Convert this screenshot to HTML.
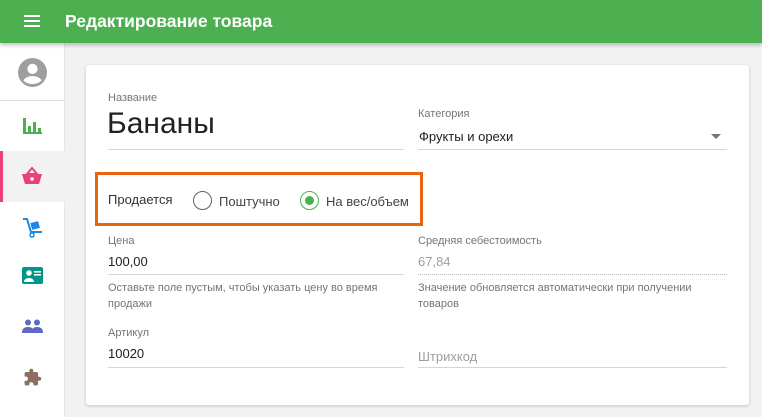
<!DOCTYPE html>
<html><head><meta charset="utf-8"><style>
*{margin:0;padding:0;box-sizing:border-box}
body{width:762px;height:417px;overflow:hidden;background:#f2f2f2;font-family:"Liberation Sans",sans-serif;position:relative}
.a{position:absolute}
.hdr{left:0;top:0;width:762px;height:43px;background:#4caf50;box-shadow:0 2px 4px rgba(0,0,0,.25);z-index:2}
.side{left:0;top:43px;width:65px;height:374px;background:#fff;border-right:1px solid #e6e6e6}
.card{left:86px;top:65px;width:663px;height:340px;background:#fff;border-radius:3px;box-shadow:0 1px 3px rgba(0,0,0,.2)}
.lbl{font-size:11px;color:#757575}
.val{font-size:13px;color:#212121}
.line{height:1px;background:#d6d6d6}
.hint{font-size:11px;color:#757575;line-height:16px}
</style></head><body>
<div class="a hdr">
<svg class="a" style="left:24px;top:14px" width="16" height="14"><rect y="1" width="16" height="2" fill="#fff"/><rect y="6" width="16" height="2" fill="#fff"/><rect y="11" width="16" height="2" fill="#fff"/></svg>
<div class="a" style="left:65px;top:11px;color:#fff;font-size:17.5px;font-weight:bold">Редактирование товара</div>
</div>
<div class="a side">
<svg class="a" style="left:18px;top:15px" width="29" height="29" viewBox="0 0 24 24"><circle cx="12" cy="12" r="12" fill="#9e9e9e"/><circle cx="12" cy="9" r="4.2" fill="#fff"/><path d="M4.5 18.5c2-3 5-3.5 7.5-3.5s5.5.5 7.5 3.5c-2 2-4.5 3-7.5 3s-5.5-1-7.5-3z" fill="#fff"/></svg>
<div class="a" style="left:0;top:57px;width:65px;height:1px;background:#ddd"></div>
<svg class="a" style="left:23px;top:75px" width="19" height="16"><g fill="#4caf50"><rect x="0" y="0" width="3" height="16"/><rect x="5" y="8" width="3" height="8"/><rect x="10" y="4" width="3" height="12"/><rect x="15" y="10" width="3" height="6"/><rect x="0" y="14" width="19" height="2"/></g></svg>
<div class="a" style="left:0;top:108px;width:65px;height:51px;background:#f2f2f2"></div>
<div class="a" style="left:0;top:108px;width:3px;height:51px;background:#ec407a"></div>
<svg class="a" style="left:22px;top:124px" width="20" height="18" viewBox="0 0 20 18"><path d="M10 1L5 7h10z" fill="none" stroke="#ec407a" stroke-width="2"/><path d="M0 7h20l-3 10H3z" fill="#ec407a"/><circle cx="10" cy="12" r="1.8" fill="#fff"/></svg>
<svg class="a" style="left:22px;top:174px" width="22" height="22" viewBox="0 0 22 22"><path d="M1 2h4l4 13h11" fill="none" stroke="#1e88e5" stroke-width="2"/><rect x="9" y="5" width="8" height="7" fill="#1e88e5" transform="rotate(-15 13 8)"/><circle cx="10" cy="18" r="2" fill="none" stroke="#1e88e5" stroke-width="1.5"/></svg>
<svg class="a" style="left:22px;top:224px" width="21" height="17"><rect width="21" height="17" rx="2" fill="#009688"/><circle cx="7" cy="6" r="2.8" fill="#fff"/><path d="M2 15c0-3 3-4 5-4s5 1 5 4z" fill="#fff"/><rect x="12" y="4" width="7" height="1.6" fill="#fff"/><rect x="12" y="7" width="7" height="1.6" fill="#fff"/></svg>
<svg class="a" style="left:22px;top:276px" width="21" height="14"><g fill="#5c6bc0"><circle cx="6" cy="3.5" r="3"/><circle cx="15" cy="3.5" r="3"/><path d="M0 14c0-5 3-6 6-6s6 1 6 6z"/><path d="M10 14c0-5 2-6 5-6s6 1 6 6z"/></g></svg>
<svg class="a" style="left:23px;top:325px" width="19" height="19" viewBox="0 0 24 24"><path d="M20.5 11H19V7c0-1.1-.9-2-2-2h-4V3.5a2.5 2.5 0 0 0-5 0V5H4c-1.1 0-2 .9-2 2v3.8h1.5c1.5 0 2.7 1.2 2.7 2.7S5 16.2 3.5 16.2H2V20c0 1.1.9 2 2 2h3.8v-1.5c0-1.5 1.2-2.7 2.7-2.7s2.7 1.2 2.7 2.7V22H17c1.1 0 2-.9 2-2v-4h1.5a2.5 2.5 0 0 0 0-5z" fill="#8d6e63"/></svg>
</div>
<div class="a card"></div>
<div class="a lbl" style="left:108px;top:92px">Название</div>
<div class="a" style="left:107px;top:107px;font-size:30px;color:#212121">Бананы</div>
<div class="a line" style="left:108px;top:149px;width:296px"></div>
<div class="a lbl" style="left:418px;top:108px">Категория</div>
<div class="a val" style="left:419px;top:129px">Фрукты и орехи</div>
<svg class="a" style="left:711px;top:134px" width="10" height="5"><path d="M0 0h10L5 5z" fill="#757575"/></svg>
<div class="a line" style="left:418px;top:149px;width:309px"></div>
<div class="a" style="left:95px;top:172px;width:328px;height:54px;border:3px solid #e8650f"></div>
<div class="a val" style="left:108px;top:192px;color:#333">Продается</div>
<div class="a" style="left:193px;top:191px;width:19px;height:19px;border:1.5px solid #616161;border-radius:50%"></div>
<div class="a val" style="left:219px;top:194px;color:#444">Поштучно</div>
<div class="a" style="left:300px;top:191px;width:19px;height:19px;border:1.5px solid #4caf50;border-radius:50%"></div>
<div class="a" style="left:305px;top:196px;width:9px;height:9px;background:#4caf50;border-radius:50%"></div>
<div class="a val" style="left:326px;top:194px;color:#444">На вес/объем</div>
<div class="a lbl" style="left:108px;top:235px">Цена</div>
<div class="a val" style="left:108px;top:254px">100,00</div>
<div class="a line" style="left:108px;top:274px;width:296px"></div>
<div class="a hint" style="left:108px;top:280px;width:290px">Оставьте поле пустым, чтобы указать цену во время продажи</div>
<div class="a lbl" style="left:418px;top:235px">Средняя себестоимость</div>
<div class="a val" style="left:418px;top:254px;color:#9e9e9e">67,84</div>
<div class="a" style="left:418px;top:274px;width:309px;border-top:1px dotted #bbb"></div>
<div class="a hint" style="left:418px;top:280px;width:290px">Значение обновляется автоматически при получении товаров</div>
<div class="a lbl" style="left:108px;top:327px">Артикул</div>
<div class="a val" style="left:108px;top:346px">10020</div>
<div class="a line" style="left:108px;top:367px;width:296px"></div>
<div class="a val" style="left:418px;top:349px;color:#9e9e9e">Штрихкод</div>
<div class="a line" style="left:418px;top:367px;width:309px"></div>
</body></html>
